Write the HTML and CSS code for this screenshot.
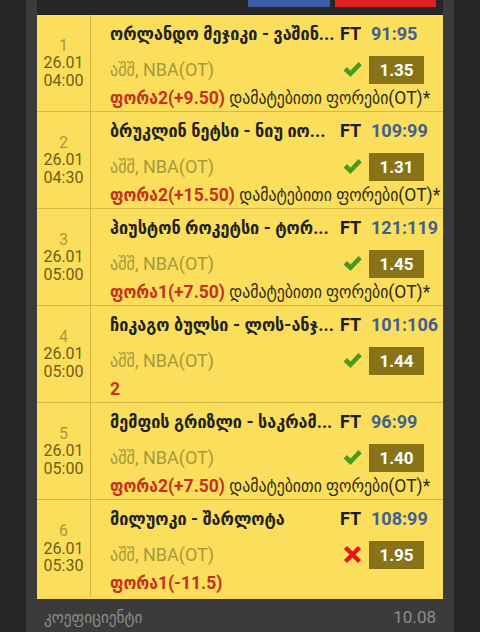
FILE: index.html
```html
<!DOCTYPE html>
<html lang="ka">
<head>
<meta charset="utf-8">
<link rel="stylesheet" href="styles.css">
</head>
<body>
<div class="panel">
  <div class="topbar"><span class="tab tab-blue"></span><span class="tab tab-red"></span></div>
  <div class="card">
    <div class="row">
      <div class="when"><span class="num">1</span><span>26.01</span><span>04:00</span></div>
      <div class="info">
        <div class="title">ორლანდო მეჯიკი - ვაშინ...</div><div class="ft">FT</div><div class="score">91:95</div>
        <div class="league">აშშ, NBA(OT)</div><div class="mark"><svg width="19" height="17" viewBox="0 0 19 17"><path d="M0.5 9.5 L4 6 L7.5 9.5 L15.5 1 L18.8 4.3 L7.5 16 Z" fill="#4b9a1b"/></svg></div><div class="odds">1.35</div>
        <div class="bet"><b>ფორა2(+9.50)</b> დამატებითი ფორები(OT)*</div>
      </div>
    </div>
    <div class="row">
      <div class="when"><span class="num">2</span><span>26.01</span><span>04:30</span></div>
      <div class="info">
        <div class="title">ბრუკლინ ნეტსი - ნიუ იო...</div><div class="ft">FT</div><div class="score">109:99</div>
        <div class="league">აშშ, NBA(OT)</div><div class="mark"><svg width="19" height="17" viewBox="0 0 19 17"><path d="M0.5 9.5 L4 6 L7.5 9.5 L15.5 1 L18.8 4.3 L7.5 16 Z" fill="#4b9a1b"/></svg></div><div class="odds">1.31</div>
        <div class="bet"><b>ფორა2(+15.50)</b> დამატებითი ფორები(OT)*</div>
      </div>
    </div>
    <div class="row">
      <div class="when"><span class="num">3</span><span>26.01</span><span>05:00</span></div>
      <div class="info">
        <div class="title">ჰიუსტონ როკეტსი - ტორ...</div><div class="ft">FT</div><div class="score">121:119</div>
        <div class="league">აშშ, NBA(OT)</div><div class="mark"><svg width="19" height="17" viewBox="0 0 19 17"><path d="M0.5 9.5 L4 6 L7.5 9.5 L15.5 1 L18.8 4.3 L7.5 16 Z" fill="#4b9a1b"/></svg></div><div class="odds">1.45</div>
        <div class="bet"><b>ფორა1(+7.50)</b> დამატებითი ფორები(OT)*</div>
      </div>
    </div>
    <div class="row">
      <div class="when"><span class="num">4</span><span>26.01</span><span>05:00</span></div>
      <div class="info">
        <div class="title">ჩიკაგო ბულსი - ლოს-ანჯ...</div><div class="ft">FT</div><div class="score">101:106</div>
        <div class="league">აშშ, NBA(OT)</div><div class="mark"><svg width="19" height="17" viewBox="0 0 19 17"><path d="M0.5 9.5 L4 6 L7.5 9.5 L15.5 1 L18.8 4.3 L7.5 16 Z" fill="#4b9a1b"/></svg></div><div class="odds">1.44</div>
        <div class="bet"><b>2</b></div>
      </div>
    </div>
    <div class="row">
      <div class="when"><span class="num">5</span><span>26.01</span><span>05:00</span></div>
      <div class="info">
        <div class="title">მემფის გრიზლი - საკრამ...</div><div class="ft">FT</div><div class="score">96:99</div>
        <div class="league">აშშ, NBA(OT)</div><div class="mark"><svg width="19" height="17" viewBox="0 0 19 17"><path d="M0.5 9.5 L4 6 L7.5 9.5 L15.5 1 L18.8 4.3 L7.5 16 Z" fill="#4b9a1b"/></svg></div><div class="odds">1.40</div>
        <div class="bet"><b>ფორა2(+7.50)</b> დამატებითი ფორები(OT)*</div>
      </div>
    </div>
    <div class="row last">
      <div class="when"><span class="num">6</span><span>26.01</span><span>05:30</span></div>
      <div class="info">
        <div class="title">მილუოკი - შარლოტა</div><div class="ft">FT</div><div class="score">108:99</div>
        <div class="league">აშშ, NBA(OT)</div><div class="mark"><svg width="19" height="19" viewBox="0 0 19 19"><path d="M2.5 2.5 L16.5 16.5 M16.5 2.5 L2.5 16.5" fill="none" stroke="#e8140f" stroke-width="4.4"/></svg></div><div class="odds">1.95</div>
        <div class="bet"><b>ფორა1(-11.5)</b></div>
      </div>
    </div>
  </div>
  <div class="footer"><span>კოეფიციენტი</span><span>10.08</span></div>
</div>
</body>
</html>
```

FILE: styles.css
```css
* { box-sizing: border-box; }
html, body { margin: 0; padding: 0; }
body {
  background: #262626;
  font-family: Roboto, "DejaVu Sans Condensed", "DejaVu Sans", sans-serif;
  width: 480px;
  height: 632px;
  overflow: hidden;
}
.panel {
  margin: 0 26px;
  padding: 0 11px;
  background: #3b3b3b;
  height: 632px;
}
.topbar {
  height: 15px;
  background: #262626;
  display: flex;
  justify-content: flex-end;
  align-items: flex-start;
  gap: 5px;
  padding-right: 7px;
}
.tab { display: block; height: 7px; }
.tab-blue { width: 82px; background: #3b5ca6; }
.tab-red { width: 101px; background: #e21f24; }
.card {
  background: #fbdf5c;
  padding-bottom: 2px;
}
.row {
  display: grid;
  grid-template-columns: 54px 1fr;
  height: 97px;
  border-bottom: 1px solid #d3b844;
}
.row.last { border-bottom: none; }
.when {
  border-right: 1px solid #d3b844;
  display: flex;
  flex-direction: column;
  justify-content: center;
  align-items: center;
  font-size: 16px;
  line-height: 17.5px;
  color: #6d6015;
}
.when .num { color: #a99a3c; }
.info {
  display: grid;
  grid-template-columns: minmax(0, 1fr) 31px 71px;
  grid-template-rows: 32px 33px 24px;
  padding: 6px 1px 0 19px;
  font-size: 18px;
}
.title {
  font-weight: bold;
  color: #222;
  height: 26px;
  line-height: 26px;
  white-space: nowrap;
  overflow: hidden;
  padding-right: 2px;
}
.ft {
  font-weight: bold;
  color: #1e1e1e;
  line-height: 26px;
  height: 26px;
}
.score {
  font-weight: bold;
  color: #41608f;
  line-height: 26px;
  height: 26px;
}
.league {
  color: #a7983d;
  line-height: 33px;
  white-space: nowrap;
}
.mark {
  display: flex;
  align-items: center;
  padding-left: 3px;
}
.odds {
  margin-left: -2px;
  width: 55px;
  height: 28px;
  align-self: center;
  background: #887318;
  color: #fff;
  font-weight: bold;
  font-size: 17px;
  display: flex;
  align-items: center;
  justify-content: center;
}
.bet {
  grid-column: 1 / -1;
  line-height: 24px;
  color: #2e2a18;
  white-space: nowrap;
  overflow: hidden;
  font-size: 17.5px;
}
.bet b { color: #c5311c; }
.footer {
  display: flex;
  justify-content: space-between;
  padding: 8px 7px 0 7px;
  font-size: 17px;
  color: #8d8d8d;
}
```
